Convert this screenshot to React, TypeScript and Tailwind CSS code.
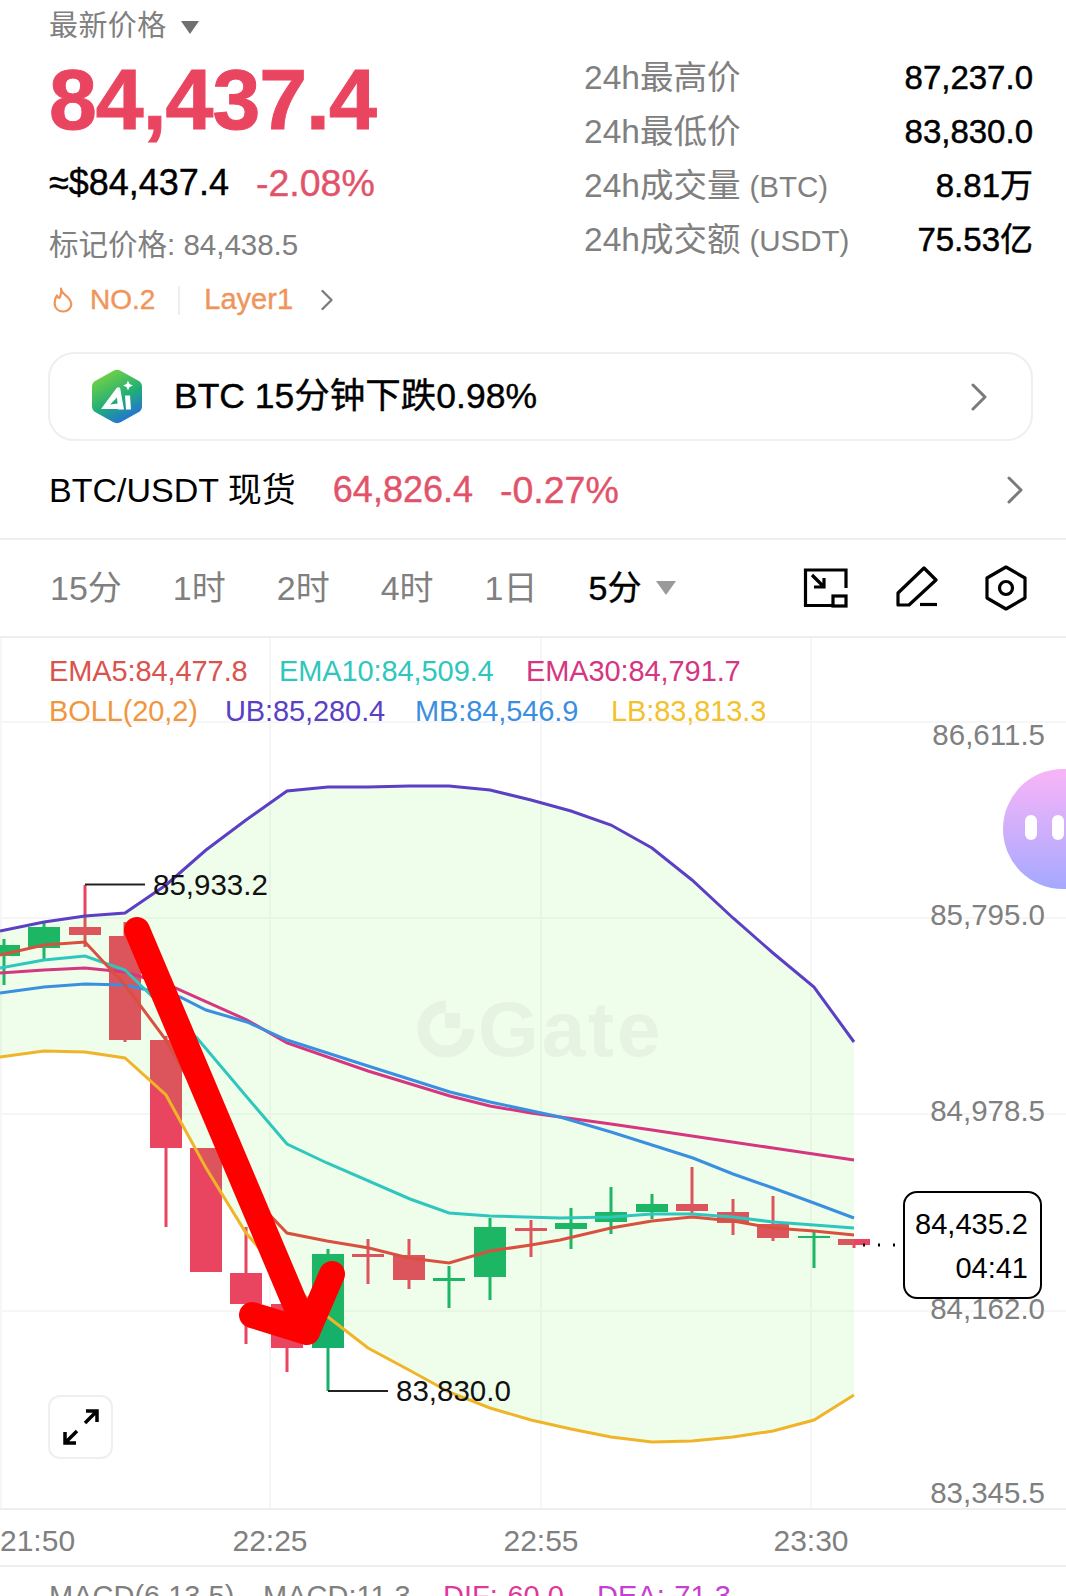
const candles: { x: number; top: number; bottom: number; hi: number; lo: number; up: boolean }[] = [
  { x: 4, top: 945, bottom: 956, hi: 939, lo: 985, up: true },
  { x: 44, top: 927, bottom: 948, hi: 922, lo: 960, up: true },
  { x: 85, top: 927, bottom: 935, hi: 885, lo: 947, up: false },
  { x: 125, top: 936, bottom: 1040, hi: 922, lo: 1042, up: false },
  { x: 166, top: 1040, bottom: 1148, hi: 1036, lo: 1227, up: false },
  { x: 206, top: 1148, bottom: 1272, hi: 1148, lo: 1272, up: false },
  { x: 246, top: 1273, bottom: 1304, hi: 1227, lo: 1344, up: false },
  { x: 287, top: 1304, bottom: 1348, hi: 1290, lo: 1372, up: false },
  { x: 328, top: 1254, bottom: 1348, hi: 1249, lo: 1391, up: true },
  { x: 368, top: 1254, bottom: 1257, hi: 1239, lo: 1284, up: false },
  { x: 409, top: 1255, bottom: 1280, hi: 1239, lo: 1289, up: false },
  { x: 449, top: 1278, bottom: 1281, hi: 1266, lo: 1308, up: true },
  { x: 490, top: 1227, bottom: 1277, hi: 1218, lo: 1300, up: true },
  { x: 531, top: 1228, bottom: 1231, hi: 1220, lo: 1257, up: false },
  { x: 571, top: 1223, bottom: 1229, hi: 1208, lo: 1249, up: true },
  { x: 611, top: 1212, bottom: 1222, hi: 1187, lo: 1234, up: true },
  { x: 652, top: 1204, bottom: 1212, hi: 1194, lo: 1219, up: true },
  { x: 692, top: 1204, bottom: 1211, hi: 1167, lo: 1215, up: false },
  { x: 733, top: 1212, bottom: 1223, hi: 1199, lo: 1235, up: false },
  { x: 773, top: 1224, bottom: 1238, hi: 1196, lo: 1241, up: false },
  { x: 814, top: 1236, bottom: 1238, hi: 1232, lo: 1268, up: true },
  { x: 854, top: 1239, bottom: 1245, hi: 1239, lo: 1248, up: false },
];

const ub = '0,931 44,922 85,916 125,913 166,885 206,850 246,820 287,791 328,787 368,787 409,786 449,786 490,790 531,800 571,811 611,825 652,848 692,880 733,918 773,953 814,987 854,1042';
const lb = '0,1057 44,1051 85,1052 125,1058 166,1095 206,1168 246,1233 287,1280 328,1317 368,1348 409,1370 449,1392 490,1408 531,1420 571,1429 611,1437 652,1442 692,1441 733,1437 773,1431 814,1420 854,1395';
const mb = '0,993 44,987 85,984 125,985 180,997 206,1010 247,1022 287,1040 368,1066 450,1092 490,1102 560,1117 611,1132 652,1145 693,1158 733,1174 773,1188 814,1203 854,1218';
const ema30 = '0,973 44,970 85,968 125,972 145,978 173,987 247,1020 287,1043 368,1071 450,1096 490,1106 531,1113 560,1117 611,1124 652,1130 692,1136 773,1148 854,1160';
const ema10 = '0,968 44,960 85,956 125,970 166,1010 197,1038 246,1096 287,1144 327,1163 410,1199 449,1213 490,1216 560,1218 611,1217 652,1214 692,1214 733,1217 773,1222 814,1225 854,1228';
const ema5 = '0,955 44,945 85,942 125,985 166,1040 206,1110 246,1190 287,1233 327,1241 369,1248 409,1258 449,1263 490,1251 531,1245 560,1240 611,1228 652,1221 692,1217 733,1221 773,1228 814,1231 854,1235';

const bandPoints = `${ub} ${lb.split(' ').reverse().join(' ')}`;

const stats = [
  { label: '24h最高价', unit: '', value: '87,237.0' },
  { label: '24h最低价', unit: '', value: '83,830.0' },
  { label: '24h成交量', unit: '(BTC)', value: '8.81万' },
  { label: '24h成交额', unit: '(USDT)', value: '75.53亿' },
];

function Chevron({ className }: { className: string }) {
  return (
    <svg className={className} viewBox="0 0 16 28" fill="none" stroke="#7a7a7a" strokeWidth="3" strokeLinecap="round" strokeLinejoin="round">
      <path d="M2 2l12 12L2 26" />
    </svg>
  );
}

function AiLogo() {
  return (
    <svg width="50" height="55" viewBox="0 0 50 54">
      <defs>
        <linearGradient id="aiHex" x1="0.25" y1="0" x2="0.75" y2="1">
          <stop offset="0" stopColor="#7bd43f" />
          <stop offset="0.55" stopColor="#1fae78" />
          <stop offset="1" stopColor="#2468e6" />
        </linearGradient>
      </defs>
      <path d="M21 1.500a8 8 0 0 1 8 0l17 9.500a7 7 0 0 1 4 6.500v19a7 7 0 0 1-4 6.500l-17 9.500a8 8 0 0 1-8 0l-17-9.500a7 7 0 0 1-4-6.500v-19a7 7 0 0 1 4-6.500z" fill="url(#aiHex)" />
      <path d="M25 18h3l4 22h-6l-1-12-7 7 8-1v5.500H9z" fill="#fff" />
      <path d="M33 26h5l1 14h-5z" fill="#fff" />
      <path d="M36 11l1.500 3.500 3.500 1.500-3.500 1.500-1.500 3.500-1.500-3.500-3.500-1.500 3.500-1.500z" fill="#fff" />
    </svg>
  );
}

export default function App() {
  return (
    <div className="relative w-[1066px] h-[1596px] overflow-hidden bg-white text-black [font-family:'Liberation_Sans','Noto_Sans_CJK_SC',sans-serif]">
      {/* Price header */}
      <div className="flex h-[332px]">
        <div className="w-[584px] pl-[49px]">
          <div className="flex h-[54px] items-center text-[29px] tracking-[0.4px] text-[#808080]">
            最新价格
            <span className="ml-[14px] w-0 h-0 border-x-[9px] border-x-transparent border-t-[13px] border-t-[#707070]" />
          </div>
          <div className="flex h-[90px] items-center text-[86px] font-bold tracking-[-1px] text-[#ea4560] [-webkit-text-stroke:1px]">84,437.4</div>
          <div className="flex h-[78px] items-center text-[36px] [-webkit-text-stroke:0.4px]">
            ≈$84,437.4
            <span className="ml-[27px] text-[37.500px] text-[#e2536a]">-2.08%</span>
          </div>
          <div className="flex h-[46px] items-center text-[29.500px] text-[#808080]">标记价格: 84,438.5</div>
          <div className="flex h-[64px] items-center">
            <svg className="ml-[4px]" width="21" height="26" viewBox="0 0 21 26" fill="none" stroke="#f0955a" strokeWidth="2.200" strokeLinejoin="round">
              <path d="M8 1.500C8.500 6 12 7.500 15 10.500C18.500 14 19 17 17.500 20C16 23 13 24.500 10 24.500C6 24.500 2.500 22 1.800 18C1.400 14.500 2 11 4 8.500C4.500 10 5.500 11 6.500 11C8 8 8.500 5 8 1.500z" />
            </svg>
            <span className="ml-[16px] text-[28px] text-[#f0955a] [-webkit-text-stroke:0.4px]">NO.2</span>
            <span className="ml-[23px] w-[2px] h-[29px] bg-[#eeeeee]" />
            <span className="ml-[24px] text-[29px] text-[#f0955a] [-webkit-text-stroke:0.4px]">Layer1</span>
            <Chevron className="ml-[28px] w-[12px] h-[22px]" />
          </div>
        </div>
        <div className="w-[449px] pt-[51px]">
          {stats.map((s) => (
            <div key={s.label} className="flex h-[54px] items-center justify-between">
              <span className="text-[33.500px] text-[#808080]">
                {s.label}
                {s.unit && <span className="ml-[9px] text-[29.500px]">{s.unit}</span>}
              </span>
              <span className="text-[33px] [-webkit-text-stroke:0.5px]">{s.value}</span>
            </div>
          ))}
        </div>
      </div>

      {/* AI alert card */}
      <div className="mt-[20px] ml-[48px] mr-[33px] h-[89px] flex items-center rounded-[26px] border-2 border-[#efefef] pl-[42px] pr-[44px]">
        <AiLogo />
        <span className="ml-[32px] text-[35.500px] [-webkit-text-stroke:0.4px]">BTC 15分钟下跌0.98%</span>
        <Chevron className="ml-auto w-[16px] h-[28px]" />
      </div>

      {/* Spot row */}
      <div className="flex h-[97px] items-center pl-[49px] pr-[43px] pt-[1px]">
        <span className="text-[34px]">BTC/USDT 现货</span>
        <span className="ml-[37px] text-[36px] text-[#e2536a] [-webkit-text-stroke:0.4px]">64,826.4</span>
        <span className="ml-[27px] text-[37.500px] text-[#e2536a] [-webkit-text-stroke:0.4px]">-0.27%</span>
        <Chevron className="ml-auto w-[16px] h-[28px]" />
      </div>

      {/* Interval toolbar */}
      <div className="flex h-[100px] items-center border-y-2 border-[#eeeeee] pl-[50px] pr-[38px] text-[34px] text-[#808080]">
        <div className="flex items-center gap-[51px]">
          <span>15分</span>
          <span>1时</span>
          <span>2时</span>
          <span>4时</span>
          <span>1日</span>
          <span className="flex items-center text-black [-webkit-text-stroke:0.4px]">
            5分
            <span className="ml-[15px] w-0 h-0 border-x-[10px] border-x-transparent border-t-[14px] border-t-[#9a9a9a]" />
          </span>
        </div>
        <div className="ml-auto flex items-center">
          <svg width="48" height="44" viewBox="802 566 48 44" fill="none" stroke="#000" strokeWidth="3.200">
            <path d="M846 588V570H805.500V605.500H832" />
            <rect x="833" y="596" width="13" height="10" />
            <path d="M812 575l12 12M814 587h10V578" />
          </svg>
          <svg className="ml-[46px]" width="44" height="44" viewBox="895 566 44 44" fill="none" stroke="#000" strokeWidth="3.200">
            <path d="M923 568l12 12-27 25h-11v-12z" strokeLinejoin="round" />
            <path d="M919 604.500h17" />
          </svg>
          <svg className="ml-[44px]" width="44" height="46" viewBox="984 565 44 46" fill="none" stroke="#000" strokeWidth="3.200" strokeLinejoin="round">
            <path d="M1006 567l19 11v20l-19 11-19-11v-20z" />
            <circle cx="1006" cy="588" r="6.500" />
          </svg>
        </div>
      </div>

      {/* Chart */}
      <div className="relative h-[870px]">
        <svg className="absolute inset-0" width="1066" height="870" viewBox="0 638 1066 870" fill="none">
          <g stroke="#f6f6f6" strokeWidth="2">
            <path d="M0 722H1066M0 918H1066M0 1114H1066M0 1311H1066" />
            <path d="M1 638V1508M270 638V1508M541 638V1508M811 638V1508" />
          </g>
          {candles.map((c) => (
            <g key={c.x} fill={c.up ? '#15b06a' : '#ea4560'}>
              <rect x={c.x - 1.5} y={c.hi} width="3" height={c.lo - c.hi} />
              <rect x={c.x - 16} y={c.top} width="32" height={c.bottom - c.top} />
            </g>
          ))}
          <polygon points={bandPoints} fill="#5feb37" fillOpacity="0.1" />
          <polyline points={ub} stroke="#5b3fc4" strokeWidth="3" />
          <polyline points={lb} stroke="#f0b429" strokeWidth="3" />
          <polyline points={ema30} stroke="#d6357f" strokeWidth="3" />
          <polyline points={mb} stroke="#3b8fe0" strokeWidth="3" />
          <polyline points={ema10} stroke="#2fc7bd" strokeWidth="3" />
          <polyline points={ema5} stroke="#d9503f" strokeWidth="3" />
          <path d="M85 884.500H145M328 1391H388" stroke="#222" strokeWidth="2" />
          <path d="M863 1245h2M878 1245h2M893 1245h2" stroke="#000" strokeWidth="3" />
          <path d="M137 930L307 1332M252 1315L307 1332L332 1274" stroke="#ff0000" strokeWidth="26" strokeLinecap="round" strokeLinejoin="round" />
        </svg>

        {/* Legend */}
        <div className="relative pt-[13px] pl-[49px] text-[29px] leading-[40px] tracking-[-0.1px]">
          <div className="flex">
            <span className="w-[230px] text-[#d9534f]">EMA5:84,477.8</span>
            <span className="w-[247px] text-[#2fc7bd]">EMA10:84,509.4</span>
            <span className="text-[#d6357f]">EMA30:84,791.7</span>
          </div>
          <div className="flex">
            <span className="w-[176px] text-[#f0963f]">BOLL(20,2)</span>
            <span className="w-[190px] text-[#5b3fc4]">UB:85,280.4</span>
            <span className="w-[196px] text-[#3b8fe0]">MB:84,546.9</span>
            <span className="text-[#f2c22e]">LB:83,813.3</span>
          </div>
        </div>

        {/* Watermark */}
        <div className="absolute left-[417px] top-[352px] flex items-center">
          <svg width="58" height="58" viewBox="0 0 58 58" fill="none">
            <path d="M29 6.500A22.500 22.500 0 1 0 51.500 29" stroke="#e6f3e2" strokeWidth="12" />
            <rect x="28" y="13" width="15" height="15" fill="#e6f3e2" />
          </svg>
          <span className="ml-[3px] text-[78px] leading-none font-bold tracking-[3px] text-[#e6f3e2]">Gate</span>
        </div>

        {/* Price axis */}
        <span className="absolute right-[21px] top-[75px] text-[29.500px] text-[#808080]">86,611.5</span>
        <span className="absolute right-[21px] top-[255px] text-[29.500px] text-[#808080]">85,795.0</span>
        <span className="absolute right-[21px] top-[451px] text-[29.500px] text-[#808080]">84,978.5</span>
        <span className="absolute right-[21px] top-[649px] text-[29.500px] text-[#808080]">84,162.0</span>
        <span className="absolute right-[21px] top-[833px] text-[29.500px] text-[#808080]">83,345.5</span>

        {/* High / low labels */}
        <span className="absolute left-[153px] top-[225px] text-[29.500px] text-[#111]">85,933.2</span>
        <span className="absolute left-[396px] top-[731px] text-[29.500px] text-[#111]">83,830.0</span>

        {/* Last price tag */}
        <div className="absolute left-[903px] top-[553px] w-[139px] h-[108px] rounded-[14px] border-2 border-black bg-white pr-[12px] text-right text-[29px] leading-[43px] pt-[10px]">
          <div>84,435.2</div>
          <div className="mt-[1px]">04:41</div>
        </div>

        {/* Expand button */}
        <div className="absolute left-[48px] top-[757px] flex h-[64px] w-[65px] items-center justify-center rounded-[12px] border-2 border-[#efefef] bg-white">
          <svg width="38" height="38" viewBox="0 0 38 38" fill="none" stroke="#000" strokeWidth="3.500">
            <path d="M23 15L35 3M24 3h11v11M15 23L3 35M3 24v11h11" />
          </svg>
        </div>
      </div>

      {/* Time axis */}
      <div className="flex h-[59px] items-center border-y-2 border-[#eeeeee] pt-[6px] text-[30px] text-[#808080]">
        <span className="w-[230px]">21:50</span>
        <span className="w-[80px] text-center">22:25</span>
        <span className="ml-[191px] w-[80px] text-center">22:55</span>
        <span className="ml-[190px] w-[80px] text-center">23:30</span>
      </div>

      {/* MACD legend, cut by the bottom of the screen as in the capture */}
      <div className="flex pl-[49px] pt-[12px] text-[29px] leading-[34px]">
        <span className="w-[214px] text-[#808080]">MACD(6,13,5)</span>
        <span className="w-[180px] text-[#808080]">MACD:11.3</span>
        <span className="w-[154px] text-[#e0379f]">DIF:-60.0</span>
        <span className="text-[#c53fd0]">DEA:-71.3</span>
      </div>

      {/* Floating assistant */}
      <div className="absolute left-[1003px] top-[769px] h-[120px] w-[120px] rounded-full bg-gradient-to-b from-[#f9b4f7] to-[#a4a8ff]">
        <div className="flex gap-[15px] pl-[22px] pt-[46px]">
          <span className="h-[25px] w-[12px] rounded-full bg-white" />
          <span className="h-[25px] w-[12px] rounded-full bg-white" />
        </div>
      </div>
    </div>
  );
}
